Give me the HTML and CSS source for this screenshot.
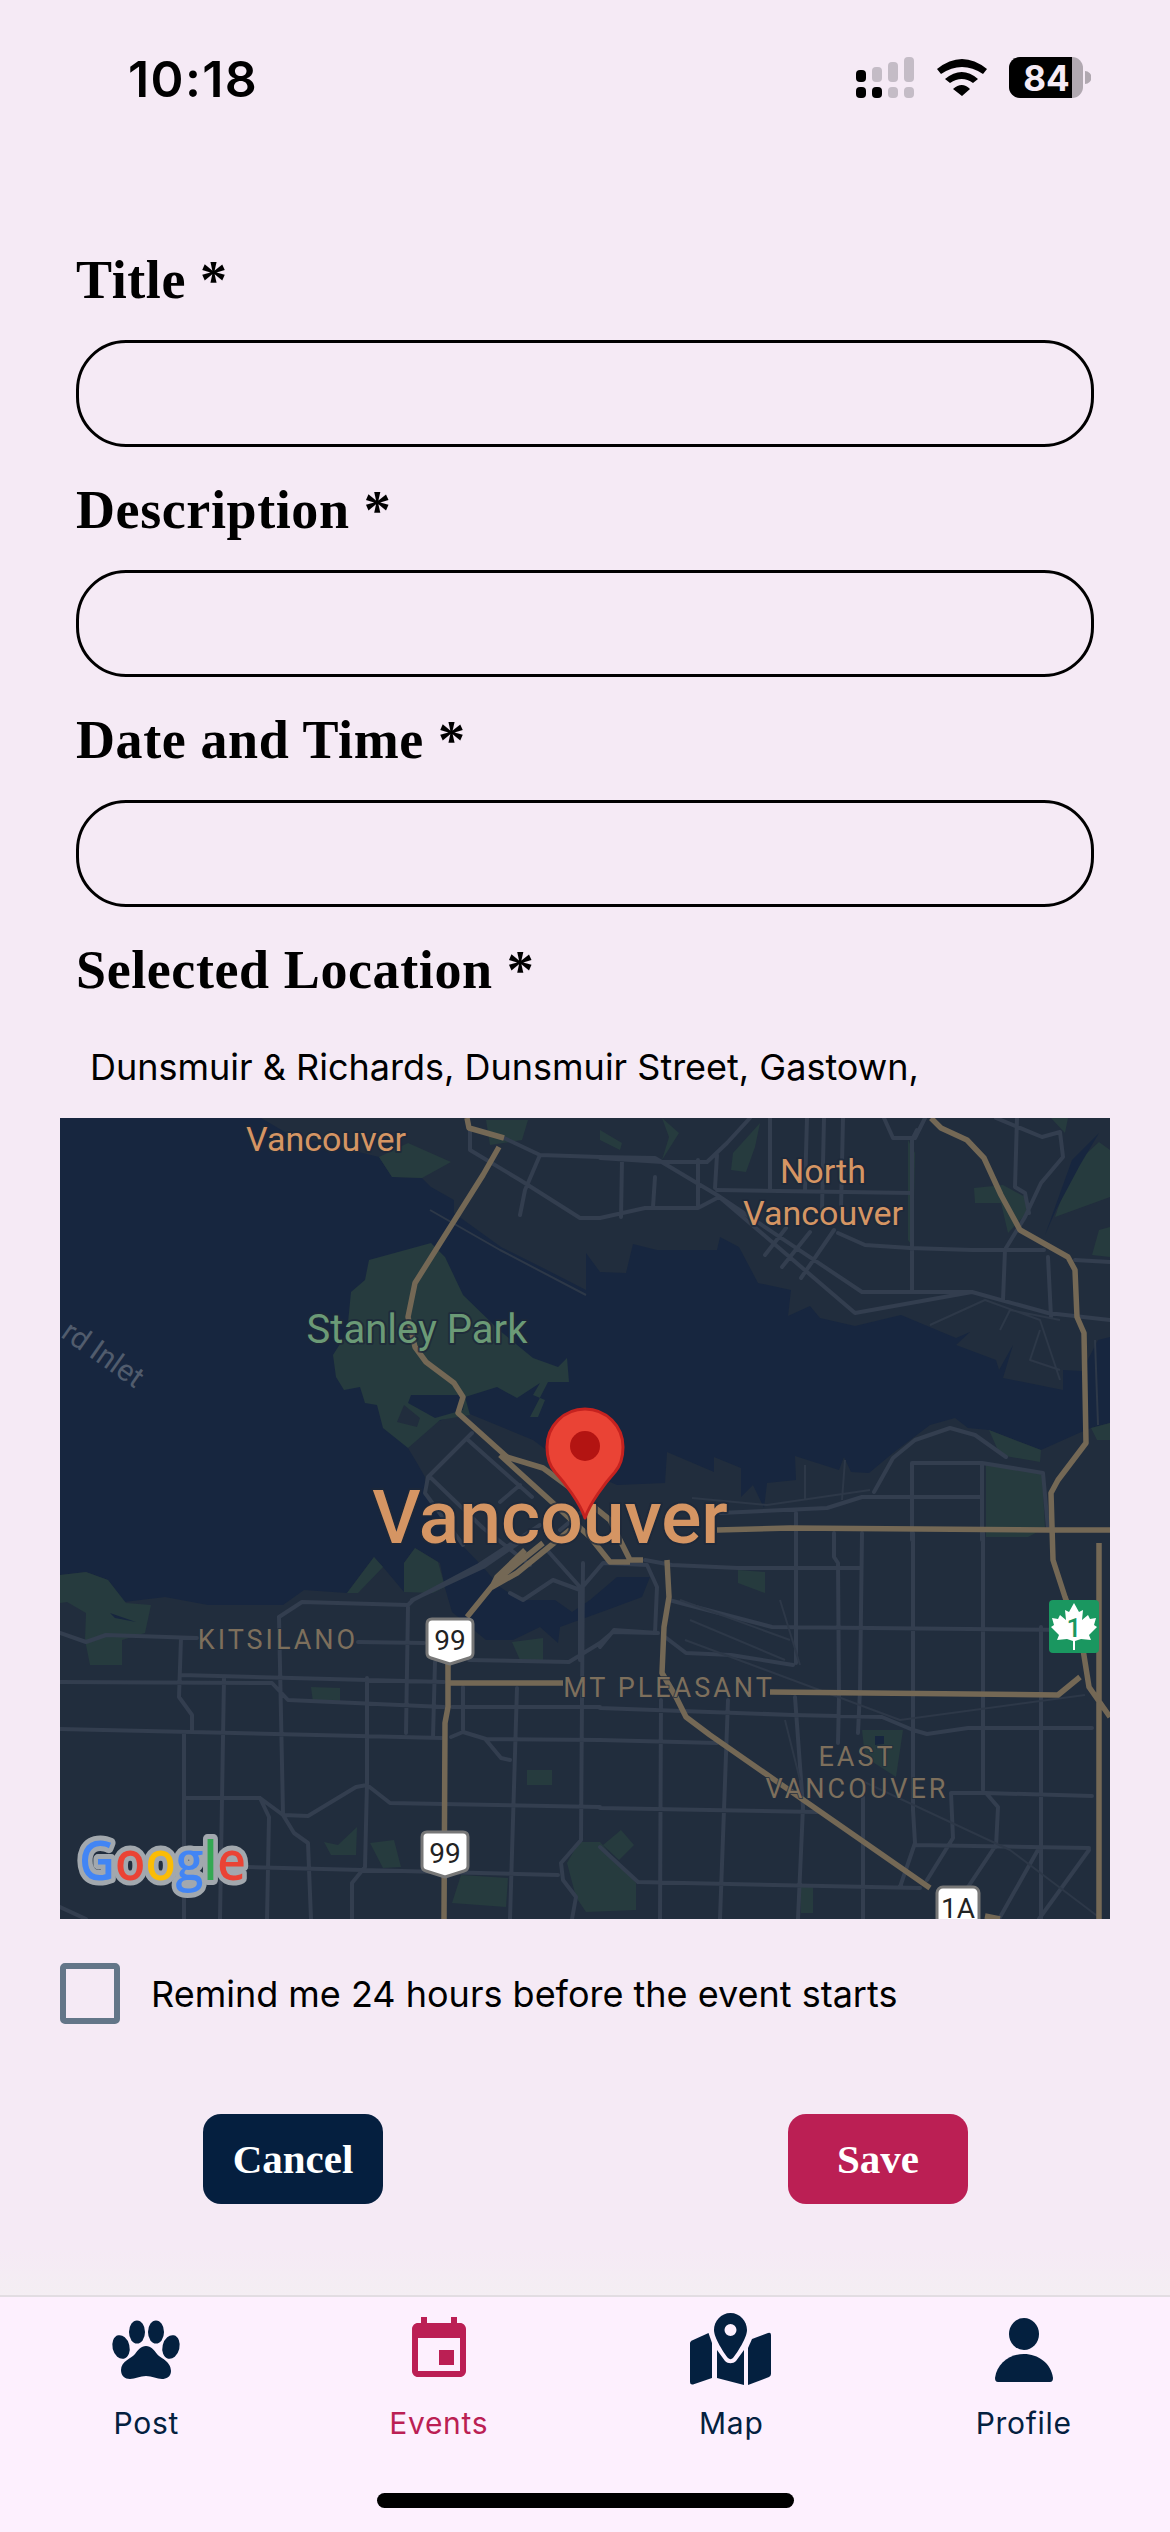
FILE: index.html
```html
<!DOCTYPE html>
<html lang="en">
<head>
<meta charset="utf-8">
<title>New Event</title>
<link rel="stylesheet" href="styles.css">
</head>
<body>
<div class="page">
  <header class="status">
    <span class="time">10:18</span>
    <svg class="status-icons" viewBox="856 55 235 45" width="235" height="45" aria-hidden="true">
      <g class="sig-on">
        <rect x="856" y="70" width="10" height="12" rx="4"/><rect x="856" y="87" width="10" height="11" rx="4"/>
        <rect x="872" y="87" width="10" height="11" rx="4"/>
      </g>
      <g class="sig-off">
        <rect x="872" y="67" width="10" height="15" rx="4"/>
        <rect x="888" y="62" width="10" height="20" rx="4"/><rect x="888" y="87" width="10" height="11" rx="4"/>
        <rect x="904" y="57" width="10" height="25" rx="4"/><rect x="904" y="87" width="10" height="11" rx="4"/>
      </g>
      <path class="sig-on" d="M937 69Q962 49 987 69L983 74Q962 60 941 74ZM945 79Q962 65 978 79L973 83Q962 75 950 83ZM953 89Q962 81 970 89L962 96Z"/>
      <rect class="batt-off" x="1009" y="57" width="74" height="41" rx="11"/>
      <path class="batt-off" d="M1085 71a6.5 6.5 0 0 1 0 13Z"/>
      <path class="sig-on" d="M1072 57H1020a11 11 0 0 0-11 11V87a11 11 0 0 0 11 11H1072Z"/>
      <text class="batt-text" x="1046.5" y="91">84</text>
    </svg>
  </header>

  <main class="form">
    <div class="field">
      <label class="label">Title *</label>
      <input class="input" type="text">
    </div>
    <div class="field">
      <label class="label">Description *</label>
      <input class="input" type="text">
    </div>
    <div class="field">
      <label class="label">Date and Time *</label>
      <input class="input" type="text">
    </div>
    <div class="field-loc">
      <label class="label">Selected Location *</label>
      <p class="address">Dunsmuir &amp; Richards, Dunsmuir Street, Gastown,</p>
    </div>

    <svg class="map" viewBox="60 1118 1050 801" width="1050" height="801" role="img" aria-label="Map of Vancouver">
      <rect class="water" x="60" y="1118" width="1050" height="801"/>
      <!-- north shore -->
      <path class="land" d="M261 1118L290 1135L379 1157L392 1177L422 1178L431 1187L454 1200V1213L501 1247L547 1270L586 1290V1253L600 1272L626 1273L633 1244L657 1250L717 1250L720 1237L739 1247L758 1283L791 1290L788 1316L810 1306L820 1318L855 1326L901 1315L956 1338L970 1332L956 1345L996 1360L999 1370L1013 1345L1003 1378L1063 1390V1370L1082 1371L1098 1340L1110 1337V1118Z"/>
      <!-- south shore, downtown, False Creek -->
      <path class="land" d="M60 1575L86 1572L108 1580L124 1602L165 1597L208 1605L283 1605L304 1590L347 1593L374 1557L383 1567L404 1592V1563L415 1548L440 1563L445 1588L452 1612L486 1640L513 1640L540 1627L558 1643L560 1627L607 1610L642 1597L650 1577L617 1577L590 1600L572 1612L555 1600L520 1600L500 1587L483 1567L457 1540L425 1493V1477L417 1463L408 1448L419 1428L465 1412L533 1440L560 1460L617 1485L665 1483L667 1452L714 1472V1457L741 1468V1497L753 1485L764 1508L767 1483L796 1480L795 1456L839 1470L844 1457L851 1472L869 1473L893 1453L930 1425L955 1418L968 1428L989 1430L1041 1450L1079 1433L1091 1428L1110 1423V1919H60Z"/>
      <!-- parks -->
      <path class="park" d="M431 1243L445 1257L463 1295L499 1330L533 1358L558 1367L567 1358L569 1382L548 1382L530 1417L538 1417L545 1400L533 1395L540 1383L517 1398L497 1387L465 1397L470 1415L440 1420L408 1448L383 1428L377 1405L365 1403L360 1387L344 1390L336 1377L333 1355L347 1333L351 1292L365 1280L369 1260Z"/>
      <path class="water" d="M411 1395L465 1395L463 1410L435 1418L408 1403Z"/>
      <path class="land" d="M404 1405L420 1418L417 1427L397 1422Z"/>
      <path class="park" d="M379 1157L392 1177L422 1178L451 1162L408 1143ZM486 1120L528 1120L522 1140L490 1145ZM662 1118L679 1133L662 1160L669 1137ZM600 1130L622 1143L620 1150L600 1140ZM760 1123L755 1147L746 1172L731 1170L733 1153ZM974 1188L1003 1185L1025 1197L1027 1213L1008 1233L1001 1203L975 1203ZM1051 1118L1068 1118L1065 1133ZM1099 1142L1110 1150V1197L1055 1217L1072 1167ZM1099 1230L1110 1227V1257L1092 1255ZM908 1140L915 1153L913 1247L908 1240ZM986 1465L1042 1473L1045 1528L1028 1537L986 1537ZM989 1430L1041 1450L1040 1462L1000 1455ZM1091 1428L1110 1423V1440L1097 1440ZM60 1575L86 1572L108 1580L126 1603L151 1605L145 1633L122 1640V1665L90 1665L85 1640L86 1613L67 1602L60 1603ZM311 1687L340 1688V1702L313 1702ZM347 1593L374 1557L383 1567L358 1593ZM404 1592V1563L415 1548L438 1562L445 1587L433 1593ZM512 1642L543 1638V1660L520 1660ZM527 1770H552V1785H527ZM324 1842L338 1845L357 1827L356 1855L331 1855ZM370 1843L394 1840L401 1867L383 1868ZM461 1875L508 1878L506 1907L452 1903ZM567 1863L579 1842H600L636 1883V1910L586 1912L576 1897ZM603 1845L621 1830L634 1845L619 1860ZM738 1570L765 1572V1593L738 1583ZM862 1730H903L896 1777L865 1757ZM800 1887H813V1913H801Z"/>
      <path class="water" d="M110 1613L136 1622L115 1618ZM875 1736H884V1744L875 1745ZM1099 1133L1072 1160L1045 1235L1056 1210L1080 1165Z"/>

      <!-- streets -->
      <path class="road" d="M504 1138L540 1155L600 1157L655 1158L717 1195L855 1313L972 1292L1048 1313L1110 1320M717 1195L862 1292L972 1292M717 1190L912 1193M912 1140L917 1130M912 1140V1290M838 1233L865 1245L910 1248L972 1250L1044 1250M1005 1250L1003 1300M1048 1257L1051 1317M622 1160L621 1217M655 1177L653 1207M698 1160V1208M600 1218L645 1208L698 1208L719 1197M717 1155L715 1188M600 1158L662 1162L707 1162L727 1143L750 1118M770 1118V1190M807 1118L805 1190M824 1118L822 1210M843 1118L841 1210M765 1255L786 1228M782 1267L810 1232M801 1278L834 1230M884 1118L893 1138H915M925 1118L915 1138M1017 1118L1015 1187L1025 1193L1029 1213M996 1118L1042 1137L1060 1132L1063 1157L1041 1183L1025 1217L1006 1248M1075 1260L1110 1262M470 1130V1150L520 1180L580 1218L600 1218M540 1155L525 1190L520 1215M912 1463V1540M912 1463L982 1463L1043 1473L1048 1528M982 1463V1540M862 1497H982M874 1492L893 1458L915 1440L950 1428L975 1435L1006 1457M720 1513L827 1508L862 1497M796 1513V1663M795 1697L803 1807L798 1919M834 1533V1557L838 1563L839 1697L838 1743M862 1533L860 1690L858 1733M913 1533V1810L915 1843L900 1887M983 1533V1790M1041 1627V1919M669 1600L772 1627L1079 1630M645 1560L672 1565L738 1568L860 1568M665 1637L686 1653L731 1655L793 1665M600 1647L614 1630L658 1633M600 1708L793 1715L882 1717L913 1730L927 1734L968 1728L1092 1728M486 1739L600 1740L717 1743M600 1808L817 1812M951 1793H986L998 1807L996 1847M951 1793L953 1838L927 1880M1092 1796L986 1793M915 1845L1089 1848M600 1847L638 1882L920 1888M661 1700L660 1919M728 1700L720 1919M994 1848L968 1887M1039 1848L999 1919M1089 1850L1039 1919M863 1797V1919M60 1633L86 1642L106 1635L197 1638M358 1642L424 1643M181 1638L179 1697L192 1715V1730M60 1682L272 1683L288 1700L444 1707M452 1707H600M181 1675L444 1682M60 1729L442 1738M451 1737L463 1732L486 1739M224 1678L220 1919M184 1732V1919M279 1617L283 1813M408 1607L406 1733M279 1617L302 1602L408 1605L413 1600L479 1565L540 1525M367 1678V1783L365 1867L352 1883V1919M184 1798H260L283 1815L308 1816L356 1787L367 1785L390 1803L600 1807M260 1798L269 1817L267 1919M283 1815L294 1833L308 1843L311 1919M247 1867L558 1875M435 1662L433 1737M463 1687V1730M517 1688L510 1919M583 1563L581 1840L561 1863L563 1880L576 1897L572 1919M486 1740L501 1758L510 1760M469 1660L569 1662L600 1643L613 1632L655 1633M472 1433L428 1477L425 1493L463 1545M468 1440L532 1497M430 1477L483 1528L530 1565M412 1600L483 1567L530 1535M547 1550L580 1587V1660M510 1593L523 1600L553 1580L580 1590L603 1563L647 1565L657 1587L655 1633M60 1907L86 1919M500 1502L520 1485M560 1530L590 1505"/>
      <path class="road-thin" d="M430 1210L500 1250L586 1295M930 1325L985 1300L1040 1320L1060 1380M1000 1330L1010 1310L1060 1320M1040 1330L1030 1360L1060 1370M1095 1340L1098 1425M692 1498L767 1505L870 1490M805 1465V1500M845 1460L842 1500M680 1600L790 1640M690 1620L785 1660M685 1640L900 1720L1085 1695M780 1600L800 1665M785 1720L800 1780M860 1780L1010 1850L1100 1918"/>

      <!-- highways -->
      <path class="hwy" d="M931 1118L941 1128L967 1140L984 1158L1001 1195L1020 1230L1068 1257L1075 1270L1077 1317L1084 1333L1086 1443L1058 1480L1051 1493L1053 1560L1065 1597L1082 1643L1089 1687L1110 1717M1099 1543V1919M717 1530L790 1528L1048 1530L1110 1530M467 1118L469 1128L504 1138M499 1147L483 1175L415 1283L408 1317L415 1347L426 1362L454 1383L463 1397L458 1413L507 1457L543 1468L573 1490L610 1520L630 1560H643M500 1455L553 1503L590 1537L610 1562H630M543 1543L497 1580L467 1617M525 1550L497 1577L492 1587L517 1573L570 1530M448 1663V1707L445 1723L444 1919M448 1683H563M770 1692L1058 1695L1080 1677M676 1697L686 1717L710 1735L930 1888M985 1916L1000 1919M667 1560L669 1597L664 1627L662 1673L676 1697"/>

      <!-- labels -->
      <text class="lbl lbl-city" x="550" y="1543">Vancouver</text>
      <text class="lbl lbl-town" x="326" y="1151">Vancouver</text>
      <text class="lbl lbl-town" x="823" y="1183">North</text>
      <text class="lbl lbl-town" x="823" y="1225">Vancouver</text>
      <text class="lbl lbl-park" x="417" y="1343">Stanley Park</text>
      <text class="lbl-inlet" transform="translate(135 1389) rotate(35)">rd Inlet</text>
      <text class="lbl lbl-area" x="278" y="1649">KITSILANO</text>
      <text class="lbl lbl-area" x="669" y="1697">MT PLEASANT</text>
      <text class="lbl lbl-area" x="857" y="1766">EAST</text>
      <text class="lbl lbl-area" x="857" y="1798">VANCOUVER</text>

      <!-- pin -->
      <path class="pin" d="M585 1518C580 1503 565 1483 555 1472C549 1465 547 1456 547 1447A38 38 0 1 1 623 1447C623 1456 621 1465 615 1472C605 1483 590 1503 585 1518Z"/>
      <circle class="pin-dot" cx="585" cy="1446" r="15"/>

      <!-- shields -->
      <g transform="translate(425 1617)">
        <path class="shield" d="M7 2H43Q48 2 48 7V36Q48 40 44 41L25 47L6 41Q2 40 2 36V7Q2 2 7 2Z"/>
        <text class="shield-text" x="25" y="33">99</text>
      </g>
      <g transform="translate(420 1830)">
        <path class="shield" d="M7 2H43Q48 2 48 7V36Q48 40 44 41L25 47L6 41Q2 40 2 36V7Q2 2 7 2Z"/>
        <text class="shield-text" x="25" y="33">99</text>
      </g>
      <g transform="translate(935 1885)">
        <rect class="shield" x="2" y="2" width="42" height="50" rx="6"/>
        <text class="shield-text" x="23" y="33">1A</text>
      </g>
      <g transform="translate(1049 1600)">
        <rect class="tc-bg" width="50" height="53" rx="4"/>
        <path class="tc-leaf" d="M25 3L30 12L34 10L33 20L39 15L41 19L47 18L45 25L48 27L40 35L42 40L32 39L26 41V50H24V41L18 39L8 40L10 35L2 27L5 25L3 18L9 19L11 15L17 20L16 10L20 12Z"/>
        <text class="tc-text" x="25" y="37">1</text>
      </g>

      <!-- logo -->
      <text class="gmark" x="79" y="1880" textLength="167" lengthAdjust="spacingAndGlyphs"><tspan class="g-blue">G</tspan><tspan class="g-red">o</tspan><tspan class="g-yellow">o</tspan><tspan class="g-blue">g</tspan><tspan class="g-green">l</tspan><tspan class="g-red">e</tspan></text>
    </svg>

    <label class="remind">
      <input class="check" type="checkbox">
      <span class="remind-text">Remind me 24 hours before the event starts</span>
    </label>

    <div class="actions">
      <button class="btn btn-cancel" type="button">Cancel</button>
      <button class="btn btn-save" type="button">Save</button>
    </div>
  </main>

  <nav class="tabs">
    <div class="tab-row">
      <a class="tab">
        <svg class="tab-icon" viewBox="-6 0 84 72" width="84" height="72" aria-hidden="true">
          <ellipse cx="11" cy="34" rx="8.5" ry="12" transform="rotate(-14 11 34)"/>
          <ellipse cx="27" cy="19" rx="8" ry="11.5"/>
          <ellipse cx="46" cy="19" rx="8" ry="11.5"/>
          <ellipse cx="61" cy="34" rx="8.5" ry="12" transform="rotate(14 61 34)"/>
          <path d="M36 33C41 33 44 37 47 41C50 45 61 48 61 58C61 64 56 66 52 66C47 66 42 63 36 63C30 63 25 66 20 66C15 66 11 63 11 57C11 48 22 45 25 41C28 37 31 33 36 33Z"/>
        </svg>
        <span class="tab-label">Post</span>
      </a>
      <a class="tab tab-active">
        <svg class="tab-icon" viewBox="-2 -0.33 28 24" width="84" height="72" aria-hidden="true">
          <path d="M17 12h-5v5h5v-5zM16 1v2H8V1H6v2H5c-1.11 0-1.99.9-1.99 2L3 19c0 1.1.89 2 2 2h14c1.1 0 2-.9 2-2V5c0-1.1-.9-2-2-2h-1V1h-2zm3 18H5V8h14v11z"/>
        </svg>
        <span class="tab-label">Events</span>
      </a>
      <a class="tab">
        <svg class="tab-icon" viewBox="0 0 84 72" width="84" height="72" aria-hidden="true">
          <path fill-rule="evenodd" d="M41.5 0C51 0 58 8 58 17C58 25 48 40 44 45C42.5 46.5 40.5 46.5 39 45C35 40 25 25 25 17C25 8 32 0 41.5 0ZM41.5 11a6 6 0 1 0 0 12a6 6 0 1 0 0-12Z"/>
          <path d="M3 27.500L19.500 20L23 30V65L4 71.500Q1 72 1 69V30Q1 28.500 3 27.500Z"/>
          <path d="M28 37L36 48C39 51 44 51 47 48L55 37V72L28 65Z"/>
          <path d="M59 35L63 26L79 20Q82 19 82 22V61Q82 63 80 64L59 72Z"/>
        </svg>
        <span class="tab-label">Map</span>
      </a>
      <a class="tab">
        <svg class="tab-icon" viewBox="0 0 84 72" width="84" height="72" aria-hidden="true">
          <ellipse cx="42" cy="21" rx="15" ry="16"/>
          <path d="M13 65C15 50 28 41 42 41C56 41 69 50 71 65C71 67.500 70 69 68 69H16C14 69 13 67.500 13 65Z"/>
        </svg>
        <span class="tab-label">Profile</span>
      </a>
    </div>
    <div class="home-indicator"></div>
  </nav>
</div>
</body>
</html>
```

FILE: styles.css
```css
* { box-sizing: border-box; }
html, body { margin: 0; padding: 0; }
body { font-family: "Inter", "Liberation Sans", sans-serif; color: #000; }

.page {
  width: 1170px;
  height: 2532px;
  display: flex;
  flex-direction: column;
  overflow: hidden;
  background: linear-gradient(#f5eaf5 0, #f5eaf5 2250px, #f4eef3 2295px);
}

/* status bar */
.status {
  height: 248px;
  flex: none;
  display: flex;
  justify-content: space-between;
  align-items: flex-start;
  padding: 49px 79px 0 128px;
}
.time { font-size: 50px; line-height: 60px; font-weight: 600; letter-spacing: 1.4px; }
.status-icons { display: block; margin-top: 6px; }
.sig-on { fill: #000; }
.sig-off { fill: #c4bcc6; }
.batt-off { fill: #b0a8b0; }
.batt-text { fill: #f5eaf5; font-size: 35px; font-weight: 700; text-anchor: middle; font-family: "Inter", sans-serif; }

/* form */
.form { padding: 0 60px; flex: none; }
.field { padding: 0 16px 31px; }
.field-loc { padding: 0 16px; }
.label {
  display: block;
  height: 64px;
  font-family: "Liberation Serif", serif;
  font-weight: 700;
  font-size: 54px;
  line-height: 64px;
  letter-spacing: 0.6px;
  color: #000;
}
.input {
  display: block;
  width: 100%;
  height: 107px;
  margin-top: 28px;
  background: transparent;
  border: 3px solid #000;
  border-radius: 50px;
  outline: none;
}
.address {
  margin: 45px 0 31px 14px;
  font-size: 36px;
  line-height: 40px;
  color: #000;
  white-space: nowrap;
}

/* map */
.map { display: block; }
.water { fill: #17263f; }
.land { fill: #212d3d; }
.park { fill: #263b3e; }
.road { fill: none; stroke: #333e4f; stroke-width: 4; stroke-linejoin: round; stroke-linecap: round; }
.road-thin { fill: none; stroke: #2d3848; stroke-width: 2; stroke-linejoin: round; }
.hwy { fill: none; stroke: #746855; stroke-width: 5.5; stroke-linejoin: round; }
.lbl {
  font-family: "Roboto", sans-serif;
  text-anchor: middle;
  paint-order: stroke;
  stroke: #1d2839;
  stroke-width: 4;
  stroke-opacity: .75;
  stroke-linejoin: round;
}
.lbl-city { fill: #d59563; font-size: 75px; font-weight: 500; }
.lbl-town { fill: #d59563; font-size: 34px; }
.lbl-park { fill: #6b9a76; font-size: 40px; }
.lbl-area { fill: #7d6f5c; font-size: 27px; letter-spacing: 3px; stroke: #212d3d; stroke-width: 2; }
.lbl-inlet { fill: #515c6d; font-family: "Roboto", sans-serif; font-size: 30px; text-anchor: end; }
.pin { fill: #ea4335; stroke: #c5221f; stroke-width: 3; stroke-linejoin: round; }
.pin-dot { fill: #b31412; }
.shield { fill: #fff; stroke: #777; stroke-width: 3; stroke-linejoin: round; }
.shield-text { fill: #222; font-family: "Roboto", sans-serif; font-size: 28px; text-anchor: middle; }
.tc-bg { fill: #1a9760; }
.tc-leaf { fill: #fff; }
.tc-text { fill: #1a9760; font-family: "Roboto", sans-serif; font-size: 26px; font-weight: 500; text-anchor: middle; }
.gmark {
  font-family: "Open Sans", sans-serif;
  font-weight: 600;
  font-size: 54px;
  paint-order: stroke;
  stroke: #a2a8ae;
  stroke-width: 10;
  stroke-linejoin: round;
}
.g-blue { fill: #4285f4; }
.g-red { fill: #ea4335; }
.g-yellow { fill: #fbbc05; }
.g-green { fill: #34a853; }

/* reminder */
.remind { display: flex; align-items: center; gap: 31px; margin-top: 44px; }
.check {
  appearance: none;
  -webkit-appearance: none;
  width: 60px;
  height: 61px;
  margin: 0;
  flex: none;
  border: 6px solid #637688;
  border-radius: 5px;
  background: transparent;
}
.remind-text { font-size: 36px; line-height: 40px; color: #000; }

/* actions */
.actions { display: flex; justify-content: space-between; margin: 90px 142px 0 143px; }
.btn {
  width: 180px;
  height: 90px;
  border: 0;
  border-radius: 18px;
  color: #fff;
  font-family: "Liberation Serif", serif;
  font-weight: 700;
  font-size: 41px;
  padding: 0;
}
.btn-cancel { background: #051f3f; }
.btn-save { background: #bb1f54; }

/* tab bar */
.tabs {
  margin-top: auto;
  height: 237px;
  flex: none;
  background: #fdf0fe;
  border-top: 2px solid #e2dde2;
  display: flex;
  flex-direction: column;
}
.tab-row { display: grid; grid-template-columns: repeat(4, 1fr); padding-top: 16px; }
.tab { display: flex; flex-direction: column; align-items: center; color: #04203f; fill: #04203f; }
.tab-active { color: #bb1f54; fill: #bb1f54; }
.tab-icon { display: block; }
.tab-label { margin-top: 20px; font-size: 30px; line-height: 36px; letter-spacing: 0.7px; }
.home-indicator { width: 417px; height: 15px; margin: 52px auto 0; background: #000; border-radius: 8px; }
```
